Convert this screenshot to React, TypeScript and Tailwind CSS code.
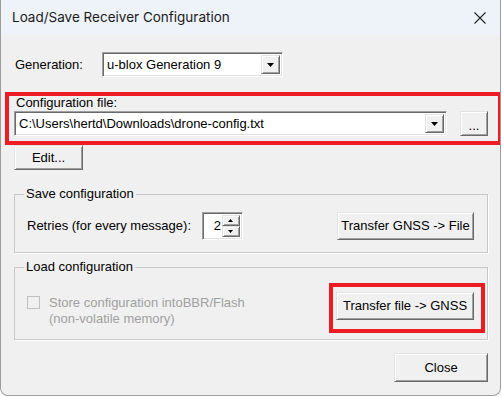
import React from 'react';

const raised =
  'border border-t-[#e3e3e3] border-l-[#e3e3e3] border-r-[#696969] border-b-[#696969] shadow-[inset_1px_1px_#ffffff,inset_-1px_-1px_#a0a0a0] bg-[#f0f0f0]';
const sunken =
  'border border-t-[#a0a0a0] border-l-[#a0a0a0] border-r-white border-b-white shadow-[inset_1px_1px_#696969,inset_-1px_-1px_#e3e3e3] bg-white';

function DownArrow() {
  return (
    <svg width="8" height="4" viewBox="0 0 8 4">
      <path d="M0 0 H7 L3.5 4 Z" fill="#000" />
    </svg>
  );
}

function Combo({ value, className }: { value: string; className: string }) {
  return (
    <div className={`${sunken} ${className} flex items-stretch p-[2px]`}>
      <div className="flex-1 flex items-center pl-[2px] text-[13px] text-black whitespace-nowrap overflow-hidden">
        {value}
      </div>
      <div className={`${raised} w-[19px] flex items-center justify-center`}>
        <DownArrow />
      </div>
    </div>
  );
}

function Button({ children, className }: { children: React.ReactNode; className: string }) {
  return (
    <button className={`${raised} ${className} flex items-center justify-center text-[13px] text-black`}>
      {children}
    </button>
  );
}

export default function App() {
  return (
    <div className="w-[502px] h-[397px] bg-white" style={{ fontFamily: '"Liberation Sans", Arial, sans-serif' }}>
      <div className="relative w-[501px] h-[396px] bg-[#f0f0f0] border border-t-0 border-[#9c9c9c] rounded-b-lg overflow-hidden">
        {/* Title bar */}
        <div className="h-[35px] bg-[#eef3f9] flex items-center justify-between pl-[11px] pr-[13px]">
          <span className="text-[13.5px] text-[#1a1a1a]" style={{ fontFamily: 'Inter, "Noto Sans", sans-serif' }}>
            Load/Save Receiver Configuration
          </span>
          <svg width="14" height="14" viewBox="0 0 14 14">
            <path d="M1.5 1.5 L12.5 12.5 M12.5 1.5 L1.5 12.5" stroke="#222" strokeWidth="1.1" />
          </svg>
        </div>

        {/* Body */}
        <div className="pl-[13px] pr-[12px]">
          <div className="mt-[17px] flex items-center h-[25px]">
            <span className="w-[88px] pl-[1px] text-[13px] text-black">Generation:</span>
            <Combo value="u-blox Generation 9" className="w-[181px] h-[25px]" />
          </div>

          <div className="mt-[18px] h-[16px] pl-[2px] text-[13px] leading-[16px] text-black">Configuration file:</div>
          <div className="flex items-center justify-between h-[25px]">
            <Combo value={'C:\\Users\\hertd\\Downloads\\drone-config.txt'} className="w-[433px] h-[25px]" />
            <Button className="w-[28px] h-[25px] text-[11px] leading-none pt-[4px] text-[#444]">...</Button>
          </div>

          <Button className="mt-[9px] w-[69px] h-[25px]">Edit...</Button>

          <fieldset className="mt-[16px] border border-[#c8c8c8] shadow-[1px_1px_#ffffff] pl-[9px] pr-[13px] pt-[10px] pb-[12px]">
            <legend className="px-[2px] text-[13px] leading-[16px] text-black">Save configuration</legend>
            <div className="flex items-center justify-between">
              <div className="flex items-center">
                <span className="w-[178px] pl-[3px] text-[13px] text-black">Retries (for every message):</span>
                <div className={`${sunken} w-[41px] h-[28px] flex p-[2px]`}>
                  <div className="flex-1 flex items-center justify-end pr-[1px] text-[13px] text-black">2</div>
                  <div className="w-[18px] flex flex-col">
                    <div className={`${raised} flex-1 flex items-center justify-center`}>
                      <svg width="6" height="3" viewBox="0 0 6 3"><path d="M0 3 H5 L2.5 0 Z" fill="#000" /></svg>
                    </div>
                    <div className={`${raised} flex-1 flex items-center justify-center`}>
                      <svg width="6" height="3" viewBox="0 0 6 3"><path d="M0 0 H5 L2.5 3 Z" fill="#000" /></svg>
                    </div>
                  </div>
                </div>
              </div>
              <Button className="w-[137px] h-[28px]">{'Transfer GNSS -> File'}</Button>
            </div>
          </fieldset>

          <fieldset className="mt-[6px] border border-[#c8c8c8] shadow-[1px_1px_#ffffff] pl-[9px] pr-[13px] pt-[17px] pb-[12px]">
            <legend className="px-[2px] text-[13px] leading-[16px] text-black">Load configuration</legend>
            <div className="flex items-start justify-between">
              <div className="flex items-start pl-[3px] pt-[3px]">
                <div className="mt-[1px] w-[13px] h-[13px] border border-[#c0c0c0] bg-[#f0f0f0]" />
                <div className="ml-[9px] text-[13px] leading-[16px] text-[#a0a0a0]">
                  <div>Store configuration intoBBR/Flash</div>
                  <div>(non-volatile memory)</div>
                </div>
              </div>
              <Button className="w-[138px] h-[28px]">{'Transfer file -> GNSS'}</Button>
            </div>
          </fieldset>

          <div className="mt-[13px] flex justify-end">
            <Button className="w-[94px] h-[29px]">Close</Button>
          </div>
        </div>

        {/* Annotation highlights */}
        <div className="absolute left-[4px] top-[92px] w-[497px] h-[53px] border-[4px] border-[#ed1c24]" />
        <div className="absolute left-[328px] top-[283px] w-[156px] h-[50px] border-[4px] border-[#ed1c24]" />
      </div>
    </div>
  );
}
